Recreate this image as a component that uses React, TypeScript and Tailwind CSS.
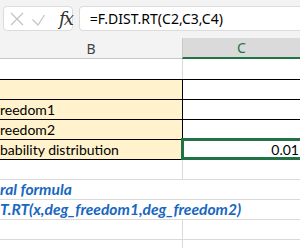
import React from "react";

const cell = "font-['Lato','Liberation_Sans',sans-serif] text-[14px] text-black";
const blueText = "font-['Lato','Liberation_Sans',sans-serif] text-[15.6px] font-bold italic text-[#1967bf]";

function Cut({ hidden, shown }: { hidden: string; shown: string }) {
  // sheet is scrolled: the start of the label sits left of the viewport
  return (
    <span className="relative whitespace-nowrap">
      <span className="absolute right-full whitespace-nowrap">{hidden}</span>
      {shown}
    </span>
  );
}

function TableRow({ label, value, selected }: { label?: React.ReactNode; value?: string; selected?: boolean }) {
  return (
    <div className="flex h-[20px] border-b border-black">
      <div className={`w-[182px] shrink-0 overflow-hidden bg-[#fff2cc] flex items-center ${cell}`}>{label}</div>
      <div className={`relative flex-1 border-l border-black bg-white flex items-center justify-end pr-[1px] ${cell}`}>
        {value}
        {selected && <div className="absolute -left-[2px] -top-[2px] -bottom-[1px] -right-[10px] border-[3px] border-[#217346]" />}
      </div>
    </div>
  );
}

function PlainRow({ children }: { children?: React.ReactNode }) {
  if (children) {
    // text spills over the empty C cell, so no gridline between them
    return (
      <div className={`flex h-[20px] items-center border-b border-[#d9d9d9] overflow-hidden ${blueText}`}>
        {children}
      </div>
    );
  }
  return (
    <div className="flex h-[20px] border-b border-[#d9d9d9]">
      <div className="w-[182px] shrink-0" />
      <div className="flex-1 border-l border-[#d9d9d9]" />
    </div>
  );
}

export default function App() {
  return (
    <div className="w-[300px] h-[248px] overflow-hidden bg-white">
      <div className="flex h-[38px] bg-[#f3f3f3] pt-[6px] pl-[3px]">
        <div className="flex h-[25px] w-[73px] items-center rounded-[4px] border border-[#dcdcdc] bg-white">
          <svg width="55" height="25" viewBox="0 0 55 25" className="shrink-0">
            <path d="M7 7 L19 19 M19 7 L7 19" stroke="#c4c4c4" strokeWidth="1.3" fill="none" />
            <path d="M28.5 13.5 L34 19 L40.5 9" stroke="#c4c4c4" strokeWidth="1.3" fill="none" />
          </svg>
          <span className="font-['DejaVu_Serif','Liberation_Serif',serif] text-[18px] italic leading-none text-[#333] tracking-[-2px]">
            fx
          </span>
        </div>
        <div className="ml-[6px] flex h-[25px] w-[240px] items-center rounded-l-[4px] border border-r-0 border-[#dcdcdc] bg-white pl-[10px] font-['Noto_Sans','Open_Sans',sans-serif] text-[14px] text-black whitespace-nowrap">
          =F.DIST.RT(C2,C3,C4)
        </div>
      </div>
      <div className="flex h-[21px]">
        <div className="flex w-[182px] shrink-0 items-center justify-center border-b border-[#c8c8c8] bg-[#f3f3f3] font-['Noto_Sans','Open_Sans',sans-serif] text-[14px] text-[#444]">
          B
        </div>
        <div className="flex flex-1 items-center justify-center border-b-2 border-l border-[#217346] border-l-[#c8c8c8] bg-[#dadada] font-['Noto_Sans','Open_Sans',sans-serif] text-[14px] text-[#217346]">
          C
        </div>
      </div>
      <div className="flex h-[21px] border-b border-black">
        <div className="w-[182px] shrink-0 bg-white" />
        <div className="flex-1 border-l border-[#d9d9d9] bg-white" />
      </div>
      <TableRow />
      <TableRow label={<Cut hidden="Degree of f" shown="reedom1" />} />
      <TableRow label={<Cut hidden="Degree of f" shown="reedom2" />} />
      <TableRow label={<Cut hidden="Right-tailed F pro" shown="bability distribution" />} value="0.01" selected />
      <PlainRow />
      <PlainRow>
        <Cut hidden="Gene" shown="ral formula" />
      </PlainRow>
      <PlainRow>
        <Cut hidden="=F.DIS" shown="T.RT(x,deg_freedom1,deg_freedom2)" />
      </PlainRow>
      <PlainRow />
      <PlainRow />
    </div>
  );
}
